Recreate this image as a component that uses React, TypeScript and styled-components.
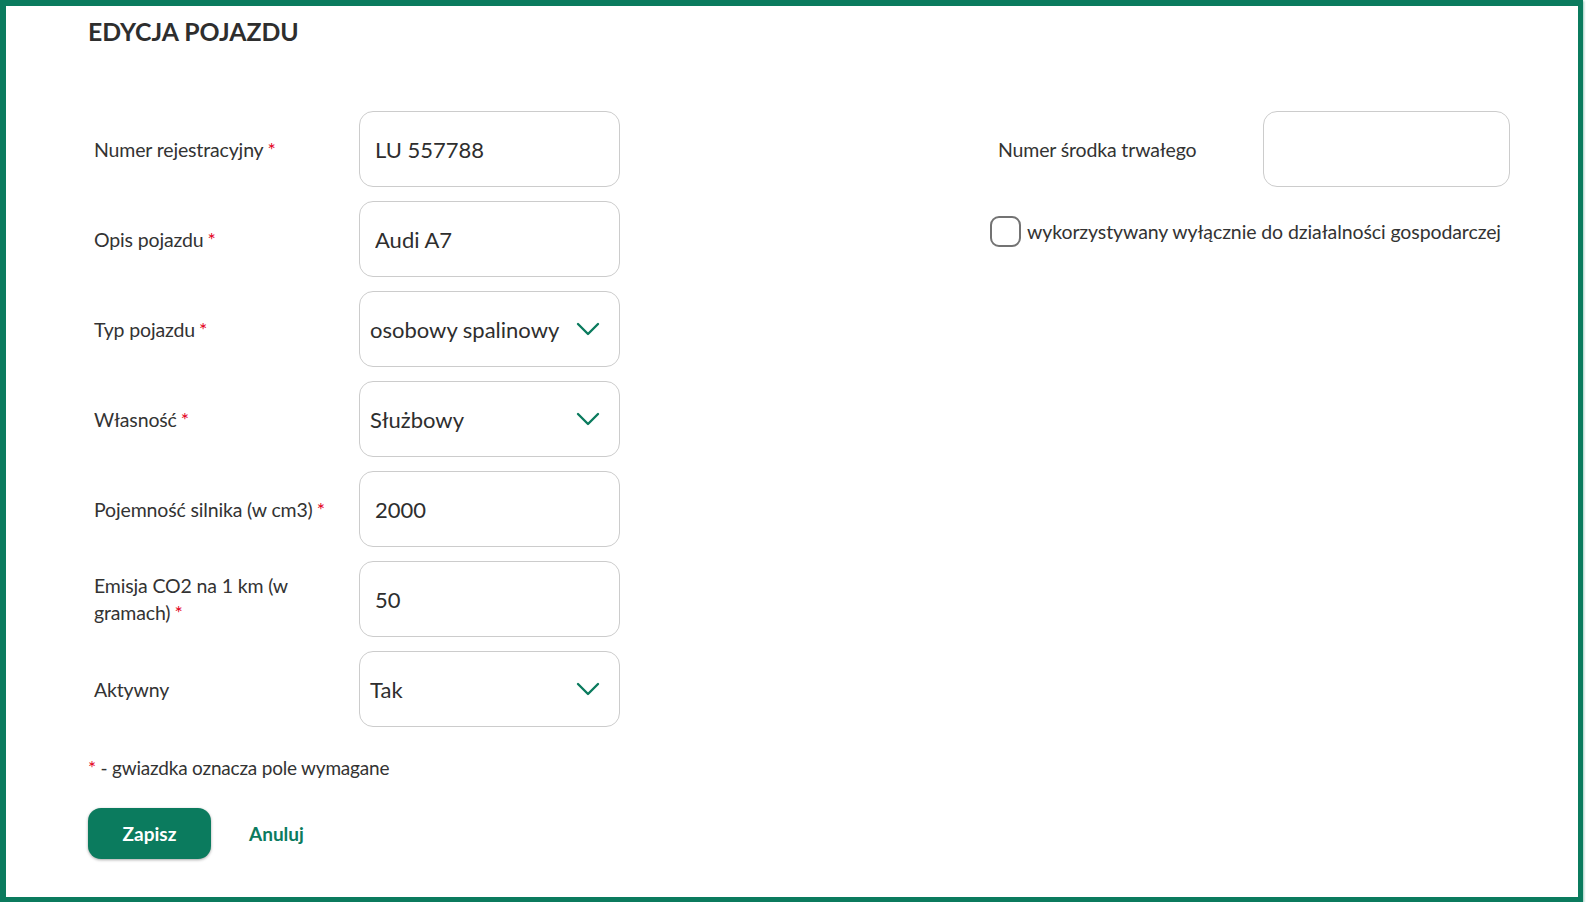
import React from 'react'
import styled, { createGlobalStyle } from 'styled-components'

const GlobalStyle = createGlobalStyle`
  body {
    margin: 0;
    background: #ffffff;
    font-family: Lato, "Open Sans", sans-serif;
    color: #333333;
  }
`

const green = '#0b7b5e'

//Styled Components
const Frame = styled.div`
  width: 1583px;
  height: 902px;
  box-sizing: border-box;
  border: 6px solid ${green};
  border-right-width: 5px;
  border-bottom-width: 5px;
  padding: 11px 0 0 82px;
  box-shadow: 1px 1px 2px rgba(11, 123, 94, 0.4);
`

const Title = styled.h1`
  margin: 0;
  font-size: 24.8px;
  line-height: 30px;
  font-weight: 700;
  color: #2e2e2e;
`

const Form = styled.form`
  display: flex;
  margin-top: 64px;
`

const LeftColumn = styled.div`
  width: 902px;
  display: flex;
  flex-direction: column;
`

const RightColumn = styled.div`
  display: flex;
  flex-direction: column;
`

const Rows = styled.div`
  display: flex;
  flex-direction: column;
  gap: 14px;
`

const Row = styled.div<{ $labelWidth: number; $inputWidth: number }>`
  display: grid;
  grid-template-columns: ${(p) => p.$labelWidth}px ${(p) => p.$inputWidth}px;
  align-items: center;
`

const Label = styled.label<{ $indent: number }>`
  padding-left: ${(p) => p.$indent}px;
  padding-right: 24px;
  font-size: 19.5px;
  line-height: 27px;
  color: #333333;
  letter-spacing: -0.15px;
`

const Star = styled.span<{ $gap?: number }>`
  color: #e3001b;
  margin-left: ${(p) => (p.$gap === undefined ? 4 : p.$gap)}px;
`

const TextInput = styled.input`
  box-sizing: border-box;
  width: 100%;
  height: 76px;
  border: 1.5px solid #cccccc;
  border-radius: 14px;
  padding: 0 15px;
  font-family: Lato, sans-serif;
  font-size: 22px;
  color: #2e2e2e;
  background: #ffffff;
  outline: none;
`

const SelectBox = styled.div`
  box-sizing: border-box;
  height: 76px;
  border: 1.5px solid #cccccc;
  border-radius: 14px;
  padding: 0 19px 0 10px;
  display: flex;
  align-items: center;
  justify-content: space-between;
  font-size: 22px;
  color: #2e2e2e;
  cursor: pointer;
`

const CheckRow = styled.label`
  display: flex;
  align-items: center;
  gap: 6px;
  margin-top: 29px;
  font-size: 19.5px;
  color: #333333;
  letter-spacing: -0.1px;
  cursor: pointer;
`

const CheckBox = styled.span`
  box-sizing: border-box;
  width: 31px;
  height: 31px;
  border: 2px solid #737373;
  border-radius: 9px;
  background: #ffffff;
`

const Note = styled.p`
  margin: 29px 0 0;
  font-size: 19px;
  line-height: 24px;
  color: #333333;
  letter-spacing: -0.2px;
`

const Actions = styled.div`
  display: flex;
  align-items: center;
  gap: 38px;
  margin-top: 28px;
`

const SaveButton = styled.button`
  width: 123px;
  height: 51px;
  border: none;
  border-radius: 13px;
  background: ${green};
  color: #ffffff;
  font-family: Lato, sans-serif;
  font-weight: 700;
  font-size: 19px;
  box-shadow: 0 1px 3px rgba(0, 0, 0, 0.35);
  cursor: pointer;
`

const CancelLink = styled.a`
  color: ${green};
  font-weight: 700;
  font-size: 19px;
  text-decoration: none;
  cursor: pointer;
`

function Chevron() {
  return (
    <svg width="24" height="14" viewBox="0 0 24 14" fill="none">
      <polyline
        points="2,2 12,12 22,2"
        stroke={green}
        strokeWidth="2.4"
        strokeLinecap="round"
        strokeLinejoin="round"
      />
    </svg>
  )
}

// Data
type Field = {
  label: string
  required: boolean
  value: string
  select?: boolean
}

const fields: Field[] = [
  { label: 'Numer rejestracyjny', required: true, value: 'LU 557788' },
  { label: 'Opis pojazdu', required: true, value: 'Audi A7' },
  { label: 'Typ pojazdu', required: true, value: 'osobowy spalinowy', select: true },
  { label: 'Własność', required: true, value: 'Służbowy', select: true },
  { label: 'Pojemność silnika (w cm3)', required: true, value: '2000' },
  { label: 'Emisja CO2 na 1 km (w gramach)', required: true, value: '50' },
  { label: 'Aktywny', required: false, value: 'Tak', select: true },
]

//React Component
export default function App() {
  return (
    <>
      <GlobalStyle />
      <Frame>
        <Title>EDYCJA POJAZDU</Title>
        <Form onSubmit={(e) => e.preventDefault()}>
          <LeftColumn>
            <Rows>
              {fields.map((f) => (
                <Row key={f.label} $labelWidth={271} $inputWidth={261}>
                  <Label $indent={6}>
                    {f.label}
                    {f.required && <Star>*</Star>}
                  </Label>
                  {f.select ? (
                    <SelectBox>
                      <span>{f.value}</span>
                      <Chevron />
                    </SelectBox>
                  ) : (
                    <TextInput defaultValue={f.value} />
                  )}
                </Row>
              ))}
            </Rows>
            <Note>
              <Star $gap={0}>*</Star> - gwiazdka oznacza pole wymagane
            </Note>
            <Actions>
              <SaveButton type="submit">Zapisz</SaveButton>
              <CancelLink>Anuluj</CancelLink>
            </Actions>
          </LeftColumn>
          <RightColumn>
            <Row $labelWidth={273} $inputWidth={247}>
              <Label $indent={8}>Numer środka trwałego</Label>
              <TextInput defaultValue="" />
            </Row>
            <CheckRow>
              <CheckBox />
              wykorzystywany wyłącznie do działalności gospodarczej
            </CheckRow>
          </RightColumn>
        </Form>
      </Frame>
    </>
  )
}
